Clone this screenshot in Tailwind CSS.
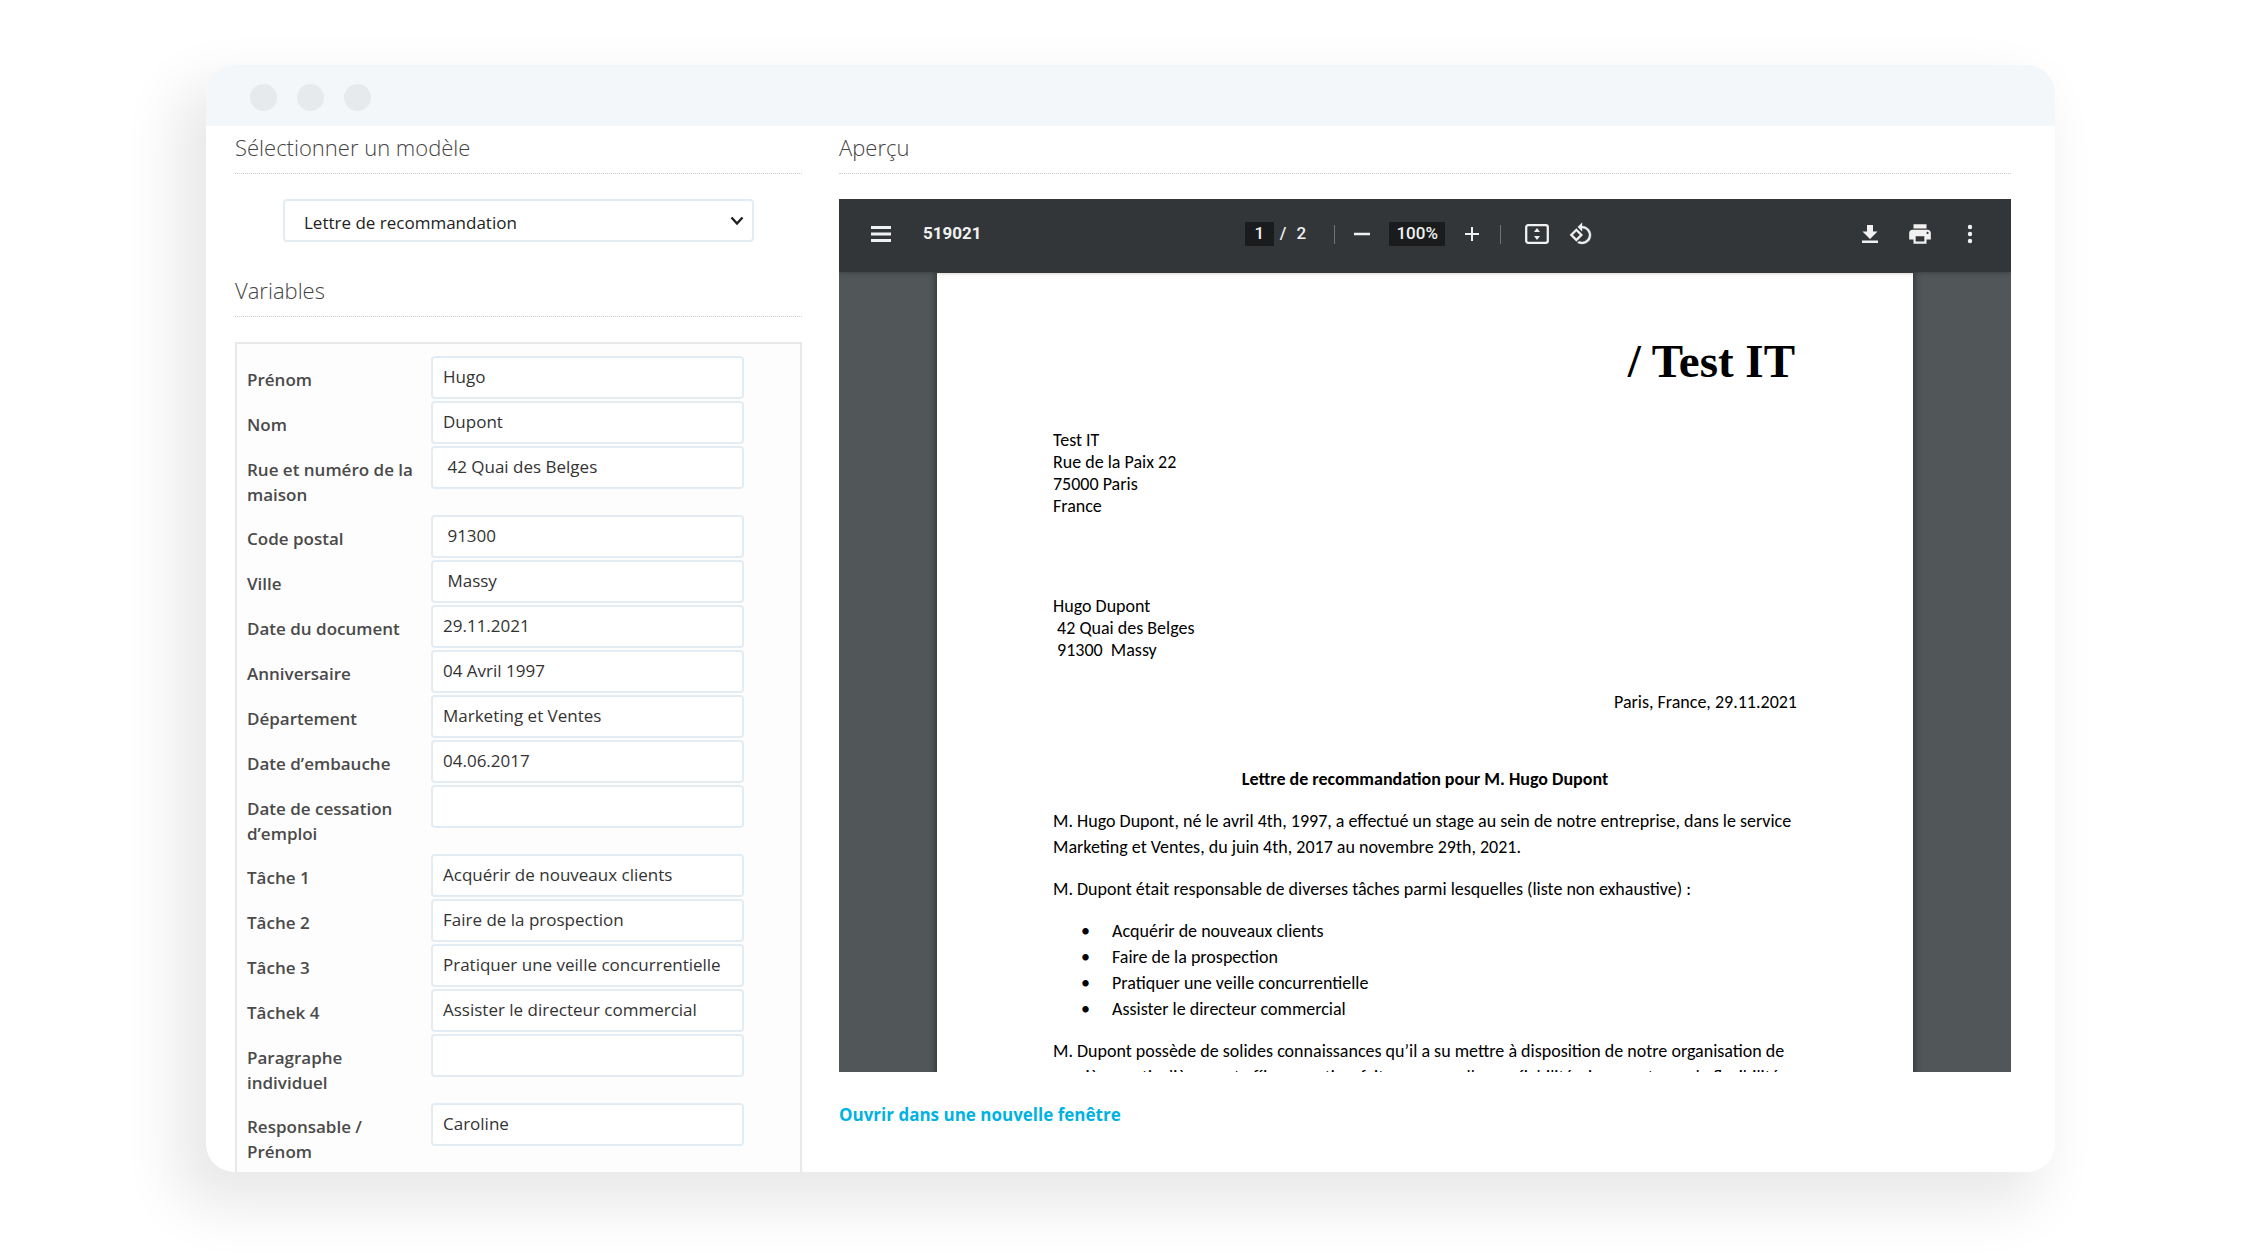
<!DOCTYPE html>
<html lang="fr">
<head>
<meta charset="utf-8">
<title>Lettre de recommandation</title>
<script src="https://cdn.jsdelivr.net/npm/@tailwindcss/browser@4"></script>
</head>
<body class="bg-white pr-[205px] pl-[206px] pt-[65px] pb-[88px] font-['Open_Sans',sans-serif] text-[#333]">
<div class="overflow-hidden rounded-[28px] bg-white shadow-[-22px_27px_56px_8px_rgba(0,0,0,0.09)]">
  <header class="flex h-[61px] items-center gap-5 bg-[#f3f7fa] px-11 pt-1">
    <span class="size-[27px] rounded-full bg-[#e6eaed]"></span>
    <span class="size-[27px] rounded-full bg-[#e6eaed]"></span>
    <span class="size-[27px] rounded-full bg-[#e6eaed]"></span>
  </header>
  <main class="grid grid-cols-[567px_minmax(0,1fr)] gap-x-[37px] pr-[44px] pl-[29px]">
    <section class="flex flex-col">
      <h2 id="model" class="h-12 border-b border-dotted border-[#ccc] pt-[5px] text-[22px] leading-8 font-light text-[#444]">Sélectionner un modèle</h2>
      <div class="relative mx-12 mt-[25px]">
        <select aria-labelledby="model" class="h-[43px] w-full appearance-none rounded border-2 border-[#e4ecf3] bg-white px-[19px] pt-1 text-[17px] text-[#222]"><option>Lettre de recommandation</option></select>
        <svg class="pointer-events-none absolute top-[17px] right-2.5 h-2.5 w-3.5" viewBox="0 0 14 10" fill="none" stroke="#222" stroke-width="2.4"><path d="M1.5 1.5 7 7.5l5.500-6"/></svg>
      </div>
      <h2 class="mt-[27px] h-12 border-b border-dotted border-[#ccc] pt-[5px] text-[22px] leading-8 font-light text-[#444]">Variables</h2>
      <form id="fields" class="mt-[25px] border-2 border-b-0 border-[#e6e8ea] bg-[#fdfdfd] pt-3 pl-2.5"></form>
    </section>
    <section>
      <h2 class="h-12 border-b border-dotted border-[#ccc] pt-[5px] text-[22px] leading-8 font-light text-[#444]">Aperçu</h2>
      <div class="mt-[25px] flex h-[873px] flex-col overflow-hidden bg-[#515659]">
        <div class="relative z-10 grid h-[73px] shrink-0 grid-cols-[1fr_auto_1fr] items-center bg-[#323639] pr-[29px] pb-[3px] pl-[31px] font-[Roboto,sans-serif] text-[17px] text-[#f1f1f1] shadow-[0_1px_4px_rgba(0,0,0,0.25)]">
          <div class="flex items-center gap-[31px]">
            <button type="button" aria-label="Menu"><svg class="h-4 w-[22px]" viewBox="0 0 22 16" fill="#f1f1f1"><path d="M1 0h20v3H1zM1 6.500h20v3H1zM1 13h20v3H1z"/></svg></button>
            <span class="font-bold">519021</span>
          </div>
          <div class="flex items-center pr-3.5">
            <input aria-label="Page" value="1" class="h-6 w-[29px] bg-[#191b1c] text-center font-medium">
            <span class="ml-1.5 font-medium">/</span><span class="ml-2.5 font-medium">2</span>
            <span class="ml-7 h-[19px] w-px bg-[#707375]"></span>
            <button type="button" aria-label="Zoom arrière" class="ml-[19px]"><svg class="size-4" viewBox="0 0 16 16" fill="#f1f1f1"><path d="M0 6.700h16v2.500H0z"/></svg></button>
            <input aria-label="Zoom" value="100%" class="ml-[19px] h-6 w-14 bg-[#191b1c] text-center font-medium">
            <button type="button" aria-label="Zoom avant" class="ml-[19px]"><svg class="size-4" viewBox="0 0 16 16" fill="#f1f1f1"><path d="M7 1h2v6h6v2H9v6H7V9H1V7h6z"/></svg></button>
            <span class="ml-5 h-[19px] w-px bg-[#707375]"></span>
            <button type="button" aria-label="Ajuster à la page" class="ml-6"><svg class="h-5 w-6" viewBox="0 0 24 20"><rect x="1.200" y="1.200" width="21.600" height="17.600" rx="2" fill="none" stroke="#f1f1f1" stroke-width="2.300"/><path fill="#f1f1f1" d="m12 4 3 4H9zM12 16l3-4H9z"/></svg></button>
            <button type="button" aria-label="Faire pivoter" class="ml-5"><svg class="size-6" viewBox="0 0 24 24" fill="#f1f1f1" stroke="#f1f1f1" stroke-width=".4"><path d="M7.340 6.410.86 12.900l6.490 6.480 6.490-6.480-6.500-6.490zM3.690 12.900l3.660-3.660L11 12.900l-3.660 3.660-3.650-3.660zm15.670-6.260A8.950 8.950 0 0 0 13 4V.76L8.760 5 13 9.240V6a7 7 0 1 1-3.030 13.300l-1.490 1.490A8.990 8.990 0 0 0 22 13c0-2.300-.88-4.610-2.640-6.360z"/></svg></button>
          </div>
          <div class="flex items-center justify-end gap-[25px]">
            <button type="button" aria-label="Télécharger"><svg class="size-6" viewBox="0 0 24 24" fill="#f1f1f1"><path d="M19.500 9.500H15V3H9v6.500H4.500L12 17zM4 18.500V21h16v-2.500z"/></svg></button>
            <button type="button" aria-label="Imprimer"><svg class="size-[26px]" viewBox="0 0 24 24" fill="#f1f1f1"><path d="M19 8H5c-1.660 0-3 1.340-3 3v6h4v4h12v-4h4v-6c0-1.660-1.340-3-3-3zm-3 11H8v-5h8v5zm3-7c-.55 0-1-.45-1-1s.45-1 1-1 1 .45 1 1-.45 1-1 1zm-1-9H6v4h12V3z"/></svg></button>
            <button type="button" aria-label="Plus"><svg class="size-6" viewBox="0 0 24 24" fill="#f1f1f1"><circle cx="12" cy="5" r="2.200"/><circle cx="12" cy="12" r="2.200"/><circle cx="12" cy="19" r="2.200"/></svg></button>
          </div>
        </div>
        <article class="mx-[98px] mt-px h-[1280px] shrink-0 bg-white px-[116px] pt-[61px] font-[Carlito,Lato,sans-serif] text-lg leading-[22px] text-black shadow-[0_0_6px_2px_rgba(0,0,0,0.35)]">
          <p class="pr-0.5 text-right font-['Liberation_Serif',serif] text-[47px] leading-[54px] font-bold">/ Test IT</p>
          <address class="mt-[41px] not-italic">Test IT<br>Rue de la Paix 22<br>75000 Paris<br>France</address>
          <address class="mt-[78px] whitespace-pre not-italic">Hugo Dupont
 42 Quai des Belges
 91300  Massy</address>
          <p class="mt-[30px] text-right">Paris, France, 29.11.2021</p>
          <h3 class="mt-[55px] text-center font-bold">Lettre de recommandation pour M. Hugo Dupont</h3>
          <p class="mt-[18px] leading-[26px] whitespace-nowrap">M. Hugo Dupont, né le avril 4th, 1997, a effectué un stage au sein de notre entreprise, dans le service<br>Marketing et Ventes, du juin 4th, 2017 au novembre 29th, 2021.</p>
          <p class="mt-4 leading-[26px]">M. Dupont était responsable de diverses tâches parmi lesquelles (liste non exhaustive)&nbsp;:</p>
          <ul class="mt-4 pl-7 leading-[26px]">
            <li class="flex before:w-[31px] before:content-['•']">Acquérir de nouveaux clients</li>
            <li class="flex before:w-[31px] before:content-['•']">Faire de la prospection</li>
            <li class="flex before:w-[31px] before:content-['•']">Pratiquer une veille concurrentielle</li>
            <li class="flex before:w-[31px] before:content-['•']">Assister le directeur commercial</li>
          </ul>
          <p class="mt-4 leading-[26px] whitespace-nowrap">M. Dupont possède de solides connaissances qu’il a su mettre à disposition de notre organisation de<br>manière particulièrement efficace, active, faite avec excellence, fiabilité, rigueur et grande flexibilité</p>
        </article>
      </div>
      <a href="#" class="mt-[31px] inline-block text-[17px] leading-6 font-bold text-[#00b2e2]">Ouvrir dans une nouvelle fenêtre</a>
    </section>
  </main>
</div>
<script>
const rows = [
  ['Prénom', 'Hugo'], ['Nom', 'Dupont'], ['Rue et numéro de la maison', ' 42 Quai des Belges'],
  ['Code postal', ' 91300'], ['Ville', ' Massy'], ['Date du document', '29.11.2021'],
  ['Anniversaire', '04 Avril 1997'], ['Département', 'Marketing et Ventes'], ['Date d’embauche', '04.06.2017'],
  ['Date de cessation d’emploi', ''], ['Tâche 1', 'Acquérir de nouveaux clients'], ['Tâche 2', 'Faire de la prospection'],
  ['Tâche 3', 'Pratiquer une veille concurrentielle'], ['Tâchek 4', 'Assister le directeur commercial'],
  ['Paragraphe individuel', ''], ['Responsable / Prénom', 'Caroline']
];
document.getElementById('fields').innerHTML = rows.map(([label, value], i) => `
  <div class="flex min-h-[45px] items-start gap-2">
    <label for="f${i}" class="w-44 pt-[11px] pb-2 text-[17px] leading-[25px] font-semibold text-[#4a4a4a]">${label}</label>
    <input id="f${i}" value="${value}" class="h-[43px] w-[313px] rounded border-2 border-[#e4ecf3] bg-white px-2.5 pb-0.5 text-[17px] text-[#333]">
  </div>`).join('');
</script>
</body>
</html>
